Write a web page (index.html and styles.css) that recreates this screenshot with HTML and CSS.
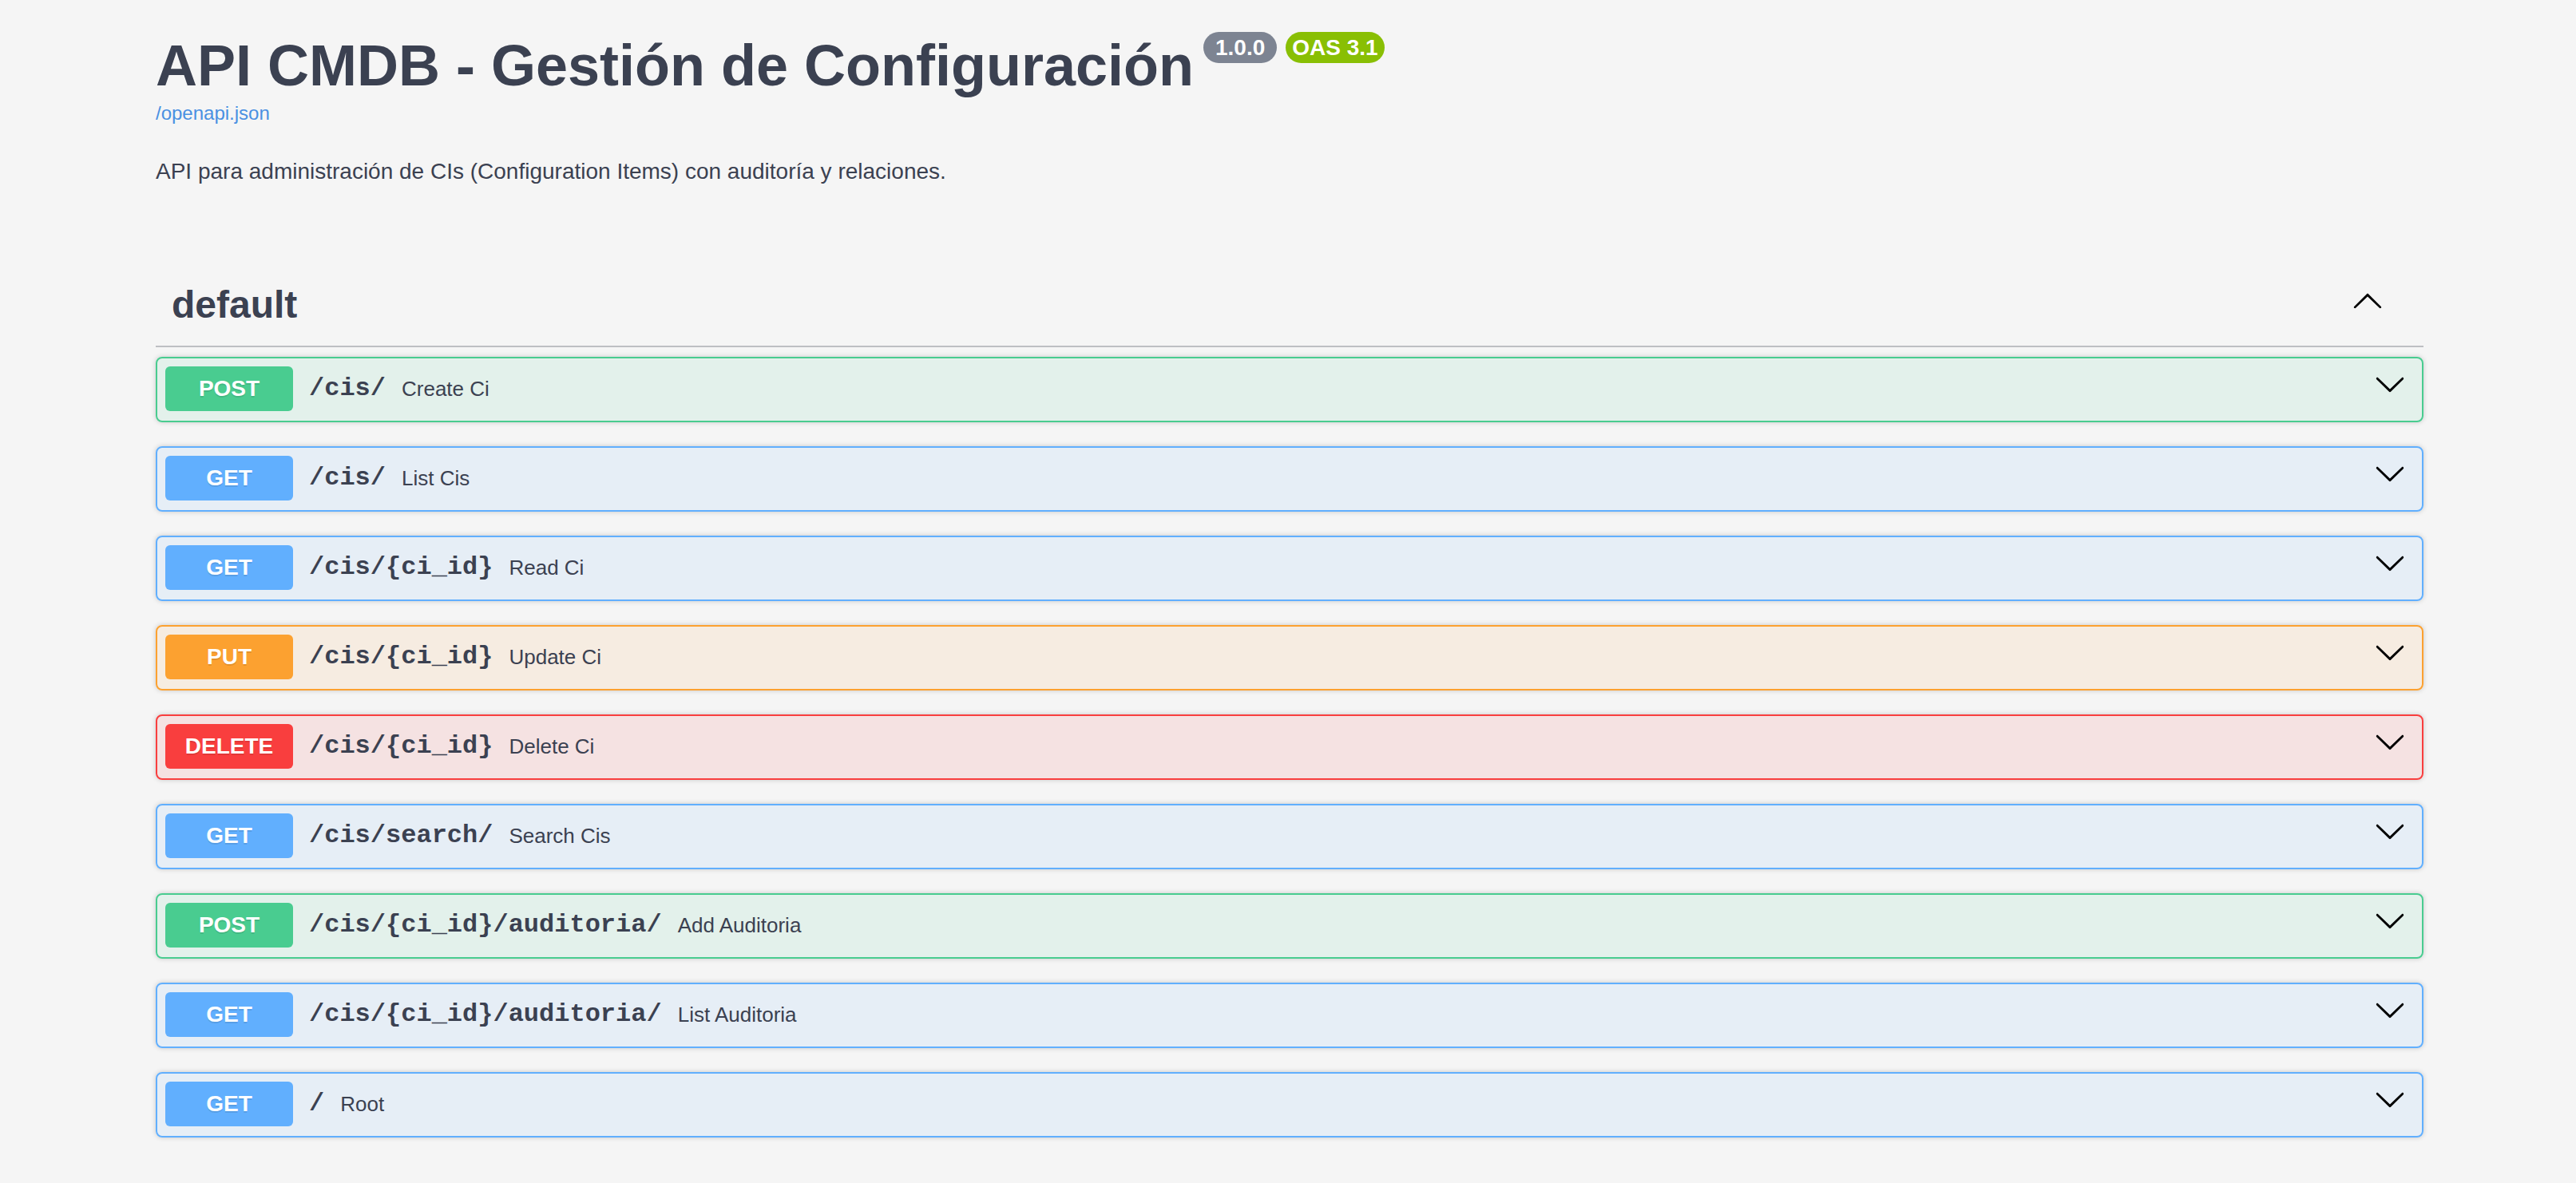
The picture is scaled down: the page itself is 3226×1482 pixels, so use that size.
FILE: index.html
```html
<!DOCTYPE html>
<html lang="es">
<head>
<meta charset="utf-8">
<title>API CMDB - Gestión de Configuración</title>
<link rel="stylesheet" href="styles.css">
</head>
<body>
<div class="wrapper">
  <section class="info">
    <h2 class="title"><span class="title-text">API CMDB - Gestión de Configuración</span><span class="badge badge-version">1.0.0</span><span class="badge badge-oas">OAS 3.1</span></h2>
    <a class="url" href="#">/openapi.json</a>
    <p class="desc">API para administración de CIs (Configuration Items) con auditoría y relaciones.</p>
  </section>

  <section class="tag-section">
    <div class="tag">
      <h3 class="tag-name">default</h3>
      <svg class="tag-arrow" viewBox="0 0 20 20" width="40" height="40" aria-hidden="true"><path d="M17.418 14.908c.272.268.709.268.979 0s.271-.701 0-.969l-7.908-7.83c-.27-.268-.707-.268-.979 0l-7.908 7.83c-.27.268-.27.701 0 .969.271.268.709.268.979 0L10 7.767l7.418 7.141z"/></svg>
    </div>

    <div class="ops">
      <div class="op op-post">
        <div class="summary"><span class="method">POST</span><span class="path">/cis/</span><span class="sdesc">Create Ci</span><svg class="arrow" viewBox="0 0 20 20" width="40" height="40" aria-hidden="true"><path d="M17.418 6.109c.272-.268.709-.268.979 0s.271.701 0 .969l-7.908 7.83c-.27.268-.707.268-.979 0l-7.908-7.83c-.27-.268-.27-.701 0-.969.271-.268.709-.268.979 0L10 13.25l7.418-7.141z"/></svg></div>
      </div>
      <div class="op op-get">
        <div class="summary"><span class="method">GET</span><span class="path">/cis/</span><span class="sdesc">List Cis</span><svg class="arrow" viewBox="0 0 20 20" width="40" height="40" aria-hidden="true"><path d="M17.418 6.109c.272-.268.709-.268.979 0s.271.701 0 .969l-7.908 7.83c-.27.268-.707.268-.979 0l-7.908-7.83c-.27-.268-.27-.701 0-.969.271-.268.709-.268.979 0L10 13.25l7.418-7.141z"/></svg></div>
      </div>
      <div class="op op-get">
        <div class="summary"><span class="method">GET</span><span class="path">/cis/{ci_id}</span><span class="sdesc">Read Ci</span><svg class="arrow" viewBox="0 0 20 20" width="40" height="40" aria-hidden="true"><path d="M17.418 6.109c.272-.268.709-.268.979 0s.271.701 0 .969l-7.908 7.83c-.27.268-.707.268-.979 0l-7.908-7.83c-.27-.268-.27-.701 0-.969.271-.268.709-.268.979 0L10 13.25l7.418-7.141z"/></svg></div>
      </div>
      <div class="op op-put">
        <div class="summary"><span class="method">PUT</span><span class="path">/cis/{ci_id}</span><span class="sdesc">Update Ci</span><svg class="arrow" viewBox="0 0 20 20" width="40" height="40" aria-hidden="true"><path d="M17.418 6.109c.272-.268.709-.268.979 0s.271.701 0 .969l-7.908 7.83c-.27.268-.707.268-.979 0l-7.908-7.83c-.27-.268-.27-.701 0-.969.271-.268.709-.268.979 0L10 13.25l7.418-7.141z"/></svg></div>
      </div>
      <div class="op op-delete">
        <div class="summary"><span class="method">DELETE</span><span class="path">/cis/{ci_id}</span><span class="sdesc">Delete Ci</span><svg class="arrow" viewBox="0 0 20 20" width="40" height="40" aria-hidden="true"><path d="M17.418 6.109c.272-.268.709-.268.979 0s.271.701 0 .969l-7.908 7.83c-.27.268-.707.268-.979 0l-7.908-7.83c-.27-.268-.27-.701 0-.969.271-.268.709-.268.979 0L10 13.25l7.418-7.141z"/></svg></div>
      </div>
      <div class="op op-get">
        <div class="summary"><span class="method">GET</span><span class="path">/cis/search/</span><span class="sdesc">Search Cis</span><svg class="arrow" viewBox="0 0 20 20" width="40" height="40" aria-hidden="true"><path d="M17.418 6.109c.272-.268.709-.268.979 0s.271.701 0 .969l-7.908 7.83c-.27.268-.707.268-.979 0l-7.908-7.83c-.27-.268-.27-.701 0-.969.271-.268.709-.268.979 0L10 13.25l7.418-7.141z"/></svg></div>
      </div>
      <div class="op op-post">
        <div class="summary"><span class="method">POST</span><span class="path">/cis/{ci_id}/auditoria/</span><span class="sdesc">Add Auditoria</span><svg class="arrow" viewBox="0 0 20 20" width="40" height="40" aria-hidden="true"><path d="M17.418 6.109c.272-.268.709-.268.979 0s.271.701 0 .969l-7.908 7.83c-.27.268-.707.268-.979 0l-7.908-7.83c-.27-.268-.27-.701 0-.969.271-.268.709-.268.979 0L10 13.25l7.418-7.141z"/></svg></div>
      </div>
      <div class="op op-get">
        <div class="summary"><span class="method">GET</span><span class="path">/cis/{ci_id}/auditoria/</span><span class="sdesc">List Auditoria</span><svg class="arrow" viewBox="0 0 20 20" width="40" height="40" aria-hidden="true"><path d="M17.418 6.109c.272-.268.709-.268.979 0s.271.701 0 .969l-7.908 7.83c-.27.268-.707.268-.979 0l-7.908-7.83c-.27-.268-.27-.701 0-.969.271-.268.709-.268.979 0L10 13.25l7.418-7.141z"/></svg></div>
      </div>
      <div class="op op-get">
        <div class="summary"><span class="method">GET</span><span class="path">/</span><span class="sdesc">Root</span><svg class="arrow" viewBox="0 0 20 20" width="40" height="40" aria-hidden="true"><path d="M17.418 6.109c.272-.268.709-.268.979 0s.271.701 0 .969l-7.908 7.83c-.27.268-.707.268-.979 0l-7.908-7.83c-.27-.268-.27-.701 0-.969.271-.268.709-.268.979 0L10 13.25l7.418-7.141z"/></svg></div>
      </div>
    </div>
  </section>
</div>
</body>
</html>
```

FILE: styles.css
```css
html, body {
  margin: 0;
  padding: 0;
}

body {
  background: #f5f5f5;
  color: #3b4151;
  font-family: "Liberation Sans", Arial, sans-serif;
}

.wrapper {
  box-sizing: border-box;
  max-width: 2920px;
  margin: 0 auto;
  padding: 0 38px 0 42px;
}

/* ---------- info ---------- */
.info {
  padding-top: 40px;
}

.title {
  display: flex;
  align-items: flex-start;
  margin: 0;
  font-size: 72px;
  line-height: 84px;
  font-weight: 700;
  color: #3b4151;
}

.badge {
  display: inline-block;
  margin-left: 11px;
  padding: 4px 15px;
  border-radius: 114px;
  font-size: 28px;
  line-height: 31px;
  font-weight: 700;
  color: #fff;
}

.badge-version {
  margin-left: 12px;
  background: #7d8492;
}

.badge-oas {
  padding: 4px 8px;
  background: #89bf04;
}

.url {
  display: block;
  margin-top: 4px;
  font-size: 24px;
  line-height: 28px;
  color: #4990e2;
  text-decoration: none;
  width: max-content;
}

.desc {
  margin: 39px 0 0;
  font-size: 28px;
  line-height: 40px;
  color: #3b4151;
}

/* ---------- tag ---------- */
.tag-section {
  margin-top: 99px;
}

.tag {
  display: flex;
  align-items: center;
  padding: 20px 40px 23px 20px;
  border-bottom: 2px solid rgba(59, 65, 81, 0.3);
}

.tag-name {
  flex: 1;
  margin: 0;
  font-size: 48px;
  line-height: 56px;
  font-weight: 700;
  color: #3b4151;
}

.tag-arrow {
  flex: none;
  margin: 0 10px 12px 0;
  fill: #000;
}

/* ---------- operations ---------- */
.ops {
  margin-top: 12px;
}

.op {
  margin-bottom: 30px;
  border: 2px solid #000;
  border-radius: 8px;
  box-shadow: 0 0 6px rgba(0, 0, 0, 0.19);
}

.summary {
  display: flex;
  align-items: center;
  padding: 10px;
  border-bottom: 2px solid transparent;
}

.method {
  flex: none;
  box-sizing: border-box;
  min-width: 160px;
  padding: 12px 0;
  border-radius: 6px;
  font-size: 28px;
  line-height: 32px;
  font-weight: 700;
  text-align: center;
  color: #fff;
  text-shadow: 0 2px 0 rgba(0, 0, 0, 0.1);
}

.path {
  flex: none;
  padding: 0 20px;
  font-family: "Liberation Mono", "Courier New", monospace;
  font-size: 32px;
  line-height: 40px;
  font-weight: 700;
  color: #3b4151;
}

.sdesc {
  flex: 1;
  font-size: 26px;
  line-height: 32px;
  color: #3b4151;
}

.arrow {
  flex: none;
  margin: 0 10px 12px 0;
  fill: #000;
}

.op-post {
  border-color: #49cc90;
  background: rgba(73, 204, 144, 0.1);
}
.op-post .method {
  background: #49cc90;
}

.op-get {
  border-color: #61affe;
  background: rgba(97, 175, 254, 0.1);
}
.op-get .method {
  background: #61affe;
}

.op-put {
  border-color: #fca130;
  background: rgba(252, 161, 48, 0.1);
}
.op-put .method {
  background: #fca130;
}

.op-delete {
  border-color: #f93e3e;
  background: rgba(249, 62, 62, 0.1);
}
.op-delete .method {
  background: #f93e3e;
}
```
